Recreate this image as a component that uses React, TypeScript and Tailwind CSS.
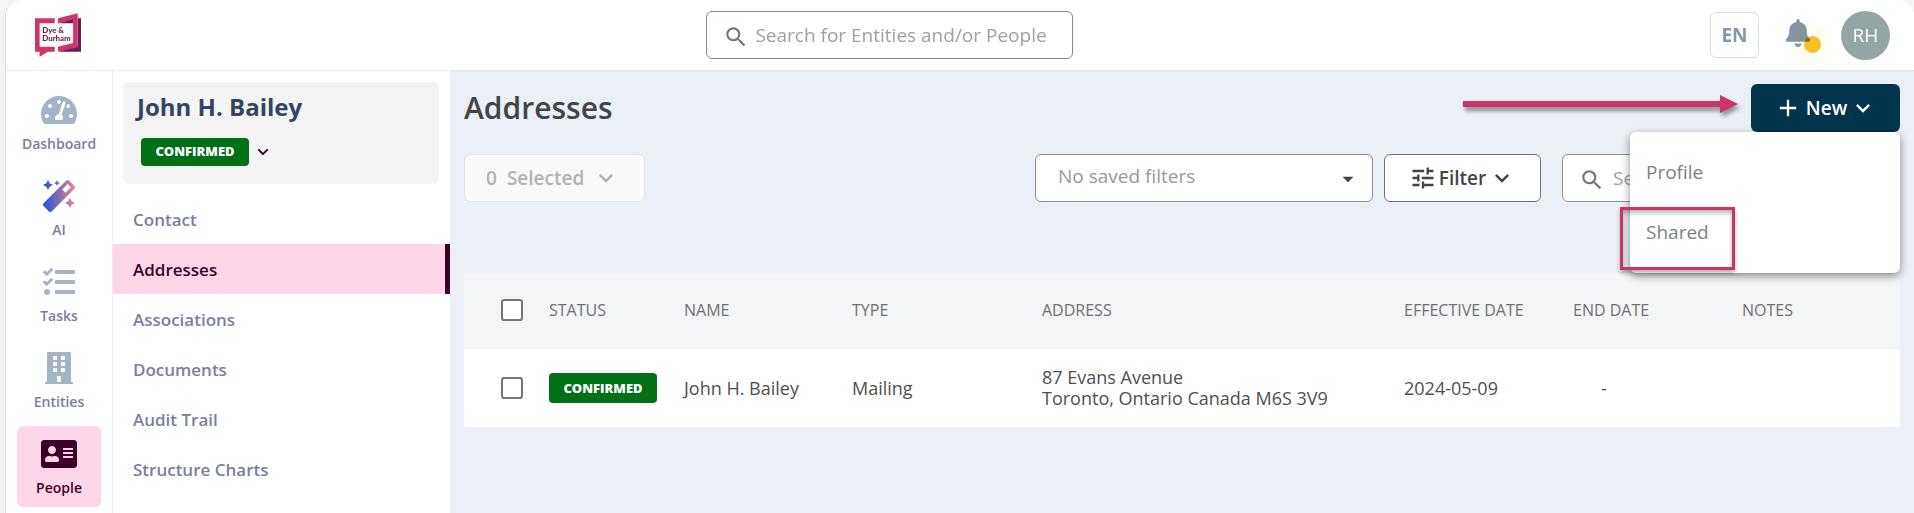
import React, { useState } from 'react';
import { FaAddressCard, FaBell, FaBuilding, FaChevronDown, FaMagic, FaTachometerAlt, FaTasks } from 'react-icons/fa';
import { MdAdd, MdArrowDropDown, MdExpandMore, MdSearch, MdTune } from 'react-icons/md';

const mainNav = [
  { label: 'Dashboard', icon: <FaTachometerAlt size={32} className="w-9" /> },
  { label: 'AI', icon: <FaMagic size={32} fill="url(#ai-gradient)" /> },
  { label: 'Tasks', icon: <FaTasks size={32} /> },
  { label: 'Entities', icon: <FaBuilding size={32} /> },
  { label: 'People', icon: <FaAddressCard size={32} className="w-9" /> },
];

const sections = ['Contact', 'Addresses', 'Associations', 'Documents', 'Audit Trail', 'Structure Charts'];

const addresses = [
  {
    name: 'John H. Bailey',
    type: 'Mailing',
    lines: ['87 Evans Avenue', 'Toronto, Ontario Canada M6S 3V9'],
    effective: '2024-05-09',
    end: '-',
    notes: '',
  },
];

function Logo() {
  return (
    <svg viewBox="105 38 142 134" className="h-11 w-12" role="img" aria-label="Dye & Durham">
      <path d="M236 54H246V156H178L236 138Z" fill="#6d1a57" />
      <path d="M176 69L224 55V69Z" fill="#6d1a57" />
      <path d="M106 54H166V69H120V141H166V156H145L120 171V156H106Z" fill="#d1336b" />
      <path d="M176 54L236 39V142L176 156V141L222 129V57L176 69Z" fill="#d1336b" />
      <text x="128" y="99" fontSize="24" fontWeight="900" fontFamily="Lato, sans-serif" fill="#6d1a57">Dye &amp;</text>
      <text x="128" y="124" fontSize="24" fontWeight="900" fontFamily="Lato, sans-serif" fill="#6d1a57">Durham</text>
    </svg>
  );
}

function StatusBadge({ label, className = 'h-7' }: { label: string; className?: string }) {
  return (
    <span className={`inline-flex w-[108px] items-center justify-center rounded bg-[#007016] text-[13px] font-extrabold text-white ${className}`}>
      {label}
    </span>
  );
}

function Header() {
  return (
    <header className="relative z-10 grid h-[70px] shrink-0 grid-cols-[14fr_367px_17fr] items-center rounded-t-2xl bg-white pr-6 pl-7 shadow-[0_1px_2px_rgba(0,0,0,0.08)]">
      <Logo />
      <label className="flex h-12 items-center rounded-md border border-[#868a8c] bg-white pl-4">
        <MdSearch size={26} className="mt-1 shrink-0 text-[#6d7881]" />
        <input
          type="search"
          aria-label="Search for Entities and/or People"
          placeholder="Search for Entities and/or People"
          className="ml-1.5 w-full min-w-0 bg-transparent text-[19px] outline-none placeholder:text-[#a0a0a0]"
        />
      </label>
      <div className="flex items-center justify-end">
        <button className="h-[46px] w-[49px] rounded-md border border-[#dcdcdc] text-[19px] font-bold text-[#8496aa]">EN</button>
        <button className="relative mr-[29px] mb-1 ml-[25px] text-[#8496a6]" aria-label="Notifications">
          <FaBell size={28} />
          <span className="absolute top-[17px] left-5 h-[17px] w-[17px] rounded-full bg-[#f8c025] shadow-[0_0_0_12px_#fffef4] mix-blend-multiply" />
        </button>
        <button className="h-[49px] w-[49px] rounded-full bg-[#95a5a6] text-[19px] text-white">RH</button>
      </div>
    </header>
  );
}

function MainNav() {
  return (
    <nav className="flex w-[107px] shrink-0 flex-col items-center gap-[5px] border-r border-[#ededf0] pt-3">
      <svg width="0" height="0" className="absolute">
        <linearGradient id="ai-gradient">
          <stop offset="0" stopColor="#1b52dc" />
          <stop offset="1" stopColor="#ea8790" />
        </linearGradient>
      </svg>
      {mainNav.map(({ label, icon }) => (
        <a
          key={label}
          href="#"
          className={`flex h-[81px] w-[84px] flex-col items-center gap-2 rounded-md pt-3 ${
            label === 'People' ? 'bg-[#ffd6e8] text-[#3d0029]' : 'text-[#a2b4c6]'
          }`}
        >
          {icon}
          <span className={`text-sm font-semibold ${label === 'People' ? '' : 'text-[#7a7f9e]'}`}>{label}</span>
        </a>
      ))}
    </nav>
  );
}

function ProfilePanel() {
  return (
    <aside className="w-[337px] shrink-0 pt-3">
      <div className="mr-[11px] mb-2.5 ml-2.5 h-[102px] rounded-md bg-[#f4f4f4] pt-[7px] pl-3.5">
        <h2 className="text-2xl leading-9 font-bold text-[#344563]">John H. Bailey</h2>
        <div className="mt-[13px] ml-1 flex items-center gap-2">
          <StatusBadge label="CONFIRMED" />
          <button aria-label="Change status" className="text-[#3d0029]">
            <FaChevronDown size={12} />
          </button>
        </div>
      </div>
      {sections.map(section => (
        <a
          key={section}
          href="#"
          className={`flex h-[50px] items-center pt-0.5 pl-5 text-[17px] font-semibold ${
            section === 'Addresses' ? 'border-r-[5px] border-[#3d0029] bg-[#ffd6e8] text-[#3d0029]' : 'text-[#7a7f9e]'
          }`}
        >
          {section}
        </a>
      ))}
    </aside>
  );
}

function NewMenu() {
  const [open, setOpen] = useState(true);
  return (
    <div className="relative">
      <button
        onClick={() => setOpen(!open)}
        className="flex h-12 w-[149px] items-center justify-center rounded-md bg-[#00344d] text-[19px] font-semibold text-white"
      >
        <MdAdd size={28} />
        <span className="mr-0.5 ml-1">New</span>
        <MdExpandMore size={28} />
      </button>
      {open && (
        <div className="absolute top-12 right-0 z-20 flex h-[141px] w-[270px] flex-col rounded-md bg-white pt-2.5 text-[19px] text-[#7c8186] shadow-[0_3px_8px_rgba(0,0,0,0.45)]">
          <button className="h-[60px] pl-4 text-left">Profile</button>
          <button className="h-[60px] pl-4 text-left">Shared</button>
          <span className="absolute top-[75px] -left-2.5 h-[63px] w-[115px] border-[3px] border-[#cc3366] shadow-[0_3px_4px_rgba(0,0,0,0.3),inset_0_3px_4px_rgba(0,0,0,0.3)]" />
        </div>
      )}
    </div>
  );
}

function Toolbar() {
  return (
    <div className="mt-[22px] flex h-12">
      <button disabled className="flex w-[181px] items-center rounded-md border border-[#e2e4e6] bg-[#f9fafc] pl-[21px] text-[19px] font-semibold text-[#b0b3b6]">
        <span>0</span>
        <span className="mr-2 ml-2.5">Selected</span>
        <MdExpandMore size={28} />
      </button>
      <div className="relative ml-auto w-[338px]">
        <select aria-label="Saved filters" className="h-full w-full appearance-none rounded-md border border-[#8c9090] bg-white pb-1 pl-[22px] text-[19px] text-[#969a9a]">
          <option>No saved filters</option>
        </select>
        <MdArrowDropDown size={26} className="pointer-events-none absolute top-3 right-3 text-[#444]" />
      </div>
      <button className="ml-[11px] flex w-[157px] items-center justify-center rounded-md border border-[#6b7280] bg-white text-[19px] font-semibold text-[#444]">
        <MdTune size={28} />
        <span className="mx-0.5">Filter</span>
        <MdExpandMore size={28} />
      </button>
      <label className="ml-[21px] flex w-[338px] items-center rounded-md border border-[#8c9090] bg-white pl-4">
        <MdSearch size={26} className="mt-1 shrink-0 text-[#6d7881]" />
        <input
          type="search"
          aria-label="Search addresses"
          placeholder="Search"
          className="ml-2 w-full min-w-0 bg-transparent text-[19px] outline-none placeholder:text-[#a0a0a0]"
        />
      </label>
    </div>
  );
}

function Checkbox({ label }: { label: string }) {
  return (
    <input
      type="checkbox"
      aria-label={label}
      className="ml-[37px] block h-[22px] w-[22px] appearance-none rounded-[3px] border-2 border-[#757575] bg-white checked:bg-[#00344d]"
    />
  );
}

function AddressTable() {
  return (
    <table className="mt-[71px] w-full table-fixed text-left text-[#4f4f4f]">
      <colgroup>
        <col className="w-[85px]" />
        <col className="w-[135px]" />
        <col className="w-[168px]" />
        <col className="w-[190px]" />
        <col />
        <col className="w-[169px]" />
        <col className="w-[169px]" />
        <col className="w-[158px]" />
      </colgroup>
      <thead>
        <tr className="h-[75px] border-b border-[#eceef0] bg-[#f4f5f7] text-base text-[#707070]">
          <th><Checkbox label="Select all" /></th>
          {['STATUS', 'NAME', 'TYPE', 'ADDRESS', 'EFFECTIVE DATE', 'END DATE', 'NOTES'].map(column => (
            <th key={column} className="font-medium">{column}</th>
          ))}
        </tr>
      </thead>
      <tbody>
        {addresses.map(row => (
          <tr key={row.name} className="h-[79px] bg-white text-lg">
            <td><Checkbox label={`Select ${row.name}`} /></td>
            <td><div className="flex"><StatusBadge label="CONFIRMED" className="h-[30px]" /></div></td>
            <td>{row.name}</td>
            <td>{row.type}</td>
            <td className="leading-[21px]">
              {row.lines.map(line => <div key={line}>{line}</div>)}
            </td>
            <td>{row.effective}</td>
            <td className="pl-7">{row.end}</td>
            <td>{row.notes}</td>
          </tr>
        ))}
      </tbody>
    </table>
  );
}

export default function App() {
  return (
    <div className="min-h-screen bg-[#f5f5f5] pl-[5px] font-['Open_Sans','Noto_Sans',sans-serif]">
      <div className="flex min-h-screen flex-col rounded-t-2xl border-l border-[#e2e2e2] bg-white">
        <Header />
        <div className="flex flex-1">
          <MainNav />
          <ProfilePanel />
          <main className="min-w-0 flex-1 bg-[#ebf0f7] px-3.5 pt-3.5">
            <div className="flex h-12 items-center">
              <h1 className="mr-auto text-[30px] leading-9 font-semibold text-[#444]">Addresses</h1>
              <svg width="276" height="24" viewBox="0 0 276 24" className="mr-3 mb-2 overflow-visible drop-shadow-[2px_4px_2px_rgba(0,0,0,0.4)]" aria-hidden="true">
                <path d="M0 9H257V3L275 12L257 21V15H0Z" fill="#cc3366" />
              </svg>
              <NewMenu />
            </div>
            <Toolbar />
            <AddressTable />
          </main>
        </div>
      </div>
    </div>
  );
}
